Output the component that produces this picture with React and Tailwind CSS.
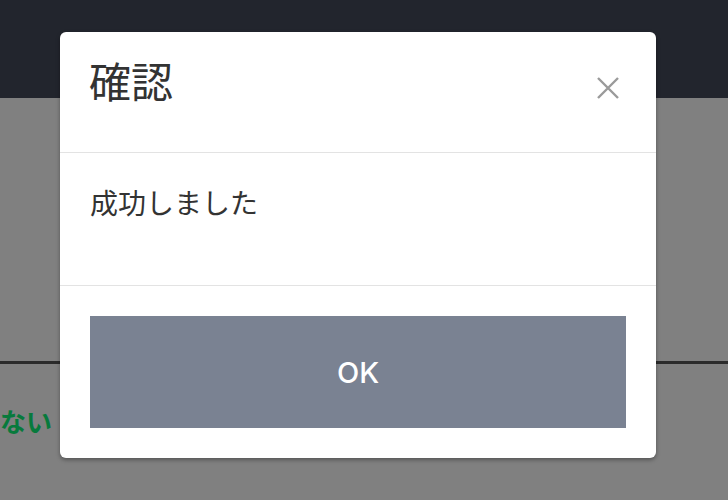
import React from 'react';

const jp = { fontFamily: '"Noto Sans CJK JP", "Noto Sans", sans-serif' };

const CloseIcon = () => (
  <svg width="24" height="24" viewBox="0 0 24 24" fill="none" stroke="#9a9a9a" strokeWidth="2.4">
    <path d="M2 2 L22 22 M22 2 L2 22" />
  </svg>
);

const App = () => {
  return (
    <div className="relative w-full h-[500px] overflow-hidden bg-[#808080]" style={jp}>
      <div className="h-[98px] bg-[#22252d]" />
      <div className="mt-[263px] border-t-[3px] border-[#2b2b2b]">
        <p className="mt-[44px] pl-[0px] text-[26px] font-bold leading-none text-[#077a3c]">ない</p>
      </div>

      <div className="absolute left-[60px] top-[32px] w-[596px] h-[426px] flex flex-col bg-white rounded-md shadow-[0_2px_4px_rgba(0,0,0,0.35)]">
        <div className="h-[121px] flex items-start justify-between pl-[29px] pr-[36px] pt-[27px] border-b border-[#e3e3e3]">
          <h1 className="text-[42px] leading-none text-[#333] font-normal">確認</h1>
          <button className="mt-[17px]">
            <CloseIcon />
          </button>
        </div>
        <div className="h-[133px] px-[30px] pt-[35px] border-b border-[#e3e3e3]">
          <p className="text-[28px] leading-none text-[#333]">成功しました</p>
        </div>
        <div className="flex-1 px-[30px] pt-[30px] pb-[30px]">
          <button className="w-full h-full pt-[2px] bg-[#7a8292] text-white text-[29px] font-medium" style={{ fontFamily: 'Inter, "Liberation Sans", sans-serif' }}>
            OK
          </button>
        </div>
      </div>
    </div>
  );
};

export default App;
